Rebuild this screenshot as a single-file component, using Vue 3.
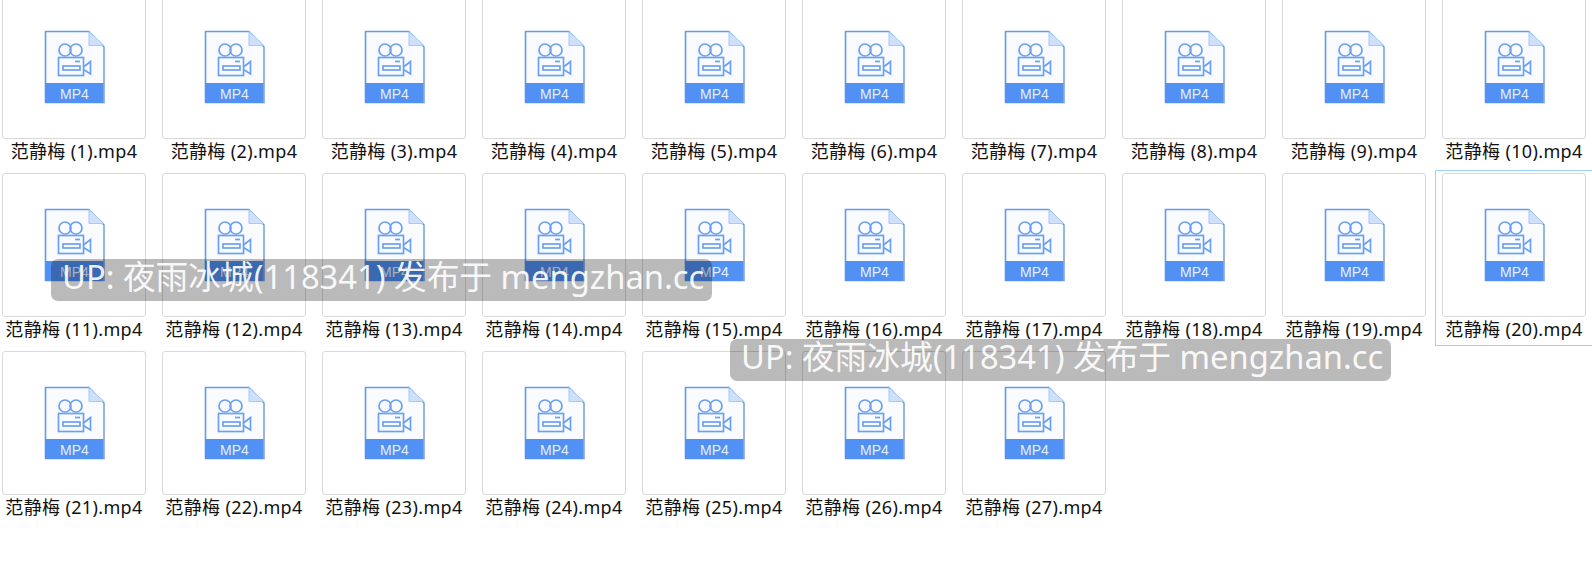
<template>
  <div class="page">
    <div class="files">
      <div v-for="n in 27" :key="n" class="file" :class="{ selected: n === 20 }">
        <div class="thumb">
          <svg class="icon" width="62" height="74" viewBox="0 0 62 74">
            <path d="M2.5 1.5H46L61 17V72.5H2.5Z" fill="#f9fbff" stroke="#5f9bf1" stroke-width="1.6" />
            <path d="M61 17V72.5" stroke="#a9b9d6" stroke-width="1.2" fill="none" />
            <path d="M46 1.5V15.5H61Z" fill="#cfe0fa" stroke="#a9c6f5" stroke-width="1" />
            <rect x="2" y="53" width="59" height="20" fill="#5191f3" />
            <path d="M61 53V73" stroke="#a3b6d8" stroke-width="1" />
            <g fill="none" stroke="#6ba1f3" stroke-width="1.7">
              <circle cx="22" cy="20" r="6" />
              <circle cx="33" cy="20" r="6" />
              <rect x="15.5" y="27.5" width="25" height="18" />
              <rect x="20" y="36" width="17" height="4" />
              <path d="M32 31.5H37" />
              <path d="M40.5 37L47.5 31.5V44L40.5 39.5" />
            </g>
            <text x="31.5" y="68.5" class="ext">MP4</text>
          </svg>
        </div>
        <div class="name">范静梅 ({{ n }}).mp4</div>
      </div>
    </div>
    <div class="mark mark-a">UP: 夜雨冰城(118341) 发布于 mengzhan.cc</div>
    <div class="mark mark-b">UP: 夜雨冰城(118341) 发布于 mengzhan.cc</div>
  </div>
</template>

<script setup>
</script>

<style>
html,
body {
  margin: 0;
  background: #fff;
}
</style>

<style scoped>
.page {
  position: relative;
  width: 1592px;
  height: 582px;
  overflow: hidden;
  background: #fff;
  font-family: "Noto Sans", "Noto Sans CJK SC", sans-serif;
}

.files {
  display: grid;
  grid-template-columns: repeat(10, 157px);
  grid-auto-rows: 176px;
  gap: 2px 3px;
  margin: -8px 0 0 -5px;
}

.file {
  box-sizing: border-box;
  padding: 2px 0 0 6px;
  border: 1px solid transparent;
}

.file.selected {
  border-color: #99d1ff;
  width: 170px;
}

.thumb {
  box-sizing: border-box;
  width: 144px;
  height: 144px;
  border: 1px solid #d9d9d9;
  border-radius: 3px;
  display: flex;
  justify-content: center;
  padding-top: 34px;
}

.icon {
  display: block;
}

.ext {
  font-family: "Liberation Sans", sans-serif;
  font-size: 14px;
  fill: #e6efff;
  text-anchor: middle;
}

.name {
  width: 144px;
  margin-top: 1px;
  text-align: center;
  white-space: nowrap;
  font-size: 18px;
  letter-spacing: 0.35px;
  line-height: 22px;
  color: #111;
}

.mark {
  position: absolute;
  box-sizing: border-box;
  width: 661px;
  height: 42px;
  padding-left: 11px;
  border-radius: 7px;
  background: rgba(0, 0, 0, 0.27);
  color: rgba(255, 255, 255, 0.92);
  font-size: 32.7px;
  line-height: 35px;
  white-space: nowrap;
}

.mark-a {
  left: 51px;
  top: 259px;
}

.mark-b {
  left: 730px;
  top: 339px;
}
</style>
